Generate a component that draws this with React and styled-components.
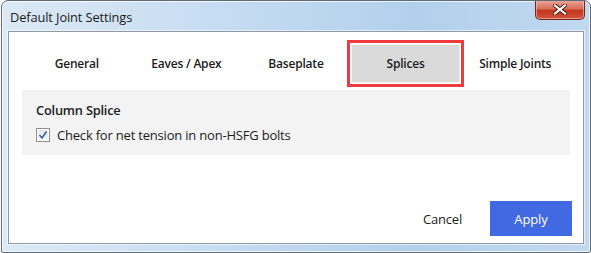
import React, { useState } from "react";
import styled, { createGlobalStyle } from "styled-components";

const GlobalStyle = createGlobalStyle`
  html, body {
    margin: 0;
    padding: 0;
    background: #ffffff;
  }
  body {
    font-family: "Open Sans", "Noto Sans", sans-serif;
    color: #1e1e1e;
  }
`;

// Window chrome
const Frame = styled.div`
  box-sizing: border-box;
  width: 590px;
  height: 253px;
  margin-left: 1px;
  display: flex;
  flex-direction: column;
  border: 1px solid #5f6b78;
  border-radius: 7px 7px 2px 2px;
  background: linear-gradient(90deg, #dce9f6 0%, #c7ddf2 35%, #b2d0ec 70%, #c1d9f0 100%);
  box-shadow: inset 0 0 0 1px rgba(255, 255, 255, 0.75);
  overflow: hidden;
`;

const TitleBar = styled.div`
  height: 30px;
  display: flex;
  align-items: flex-start;
  justify-content: space-between;
  padding-left: 8px;
  padding-right: 5px;
`;

const Title = styled.span`
  margin-top: 7px;
  font-size: 12.8px;
  color: #1b1b1b;
  letter-spacing: -0.1px;
`;

const CloseButton = styled.button`
  width: 50px;
  height: 20px;
  margin-top: -1px;
  padding: 0;
  display: flex;
  align-items: center;
  justify-content: center;
  border: 1px solid #6e2a20;
  border-top: none;
  border-radius: 0 0 5px 5px;
  background: linear-gradient(180deg, #eaa99d 0%, #da6f5a 45%, #c2381e 55%, #d0553b 100%);
  box-shadow: inset 0 0 0 1px rgba(255, 210, 200, 0.55);
  cursor: pointer;
`;

const Client = styled.div`
  flex: 1;
  margin: 0 6px 8px 6px;
  display: flex;
  flex-direction: column;
  background: #ffffff;
  border: 1px solid #8d99a6;
  box-shadow: 0 0 0 1px rgba(255, 255, 255, 0.6);
`;

// Tabs
const TabBar = styled.div`
  display: grid;
  grid-template-columns: repeat(5, 1fr);
  margin: 12px 13px 0 13px;
  height: 39px;
`;

const Tab = styled.div`
  display: flex;
  align-items: center;
  justify-content: center;
  font-size: 12px;
  font-weight: 600;
  letter-spacing: -0.2px;
  color: #1c1c1c;
  cursor: pointer;
  background: ${(p) => (p.$active ? "#dadada" : "transparent")};
  box-shadow: ${(p) =>
    p.$active ? "inset 0 0 0 1px #f4f4f4, 0 0 0 1px #ffffff, 0 0 0 4px #ee3a3f" : "none"};
`;

// Content panel
const Panel = styled.div`
  margin: 7px 13px 0 13px;
  height: 65px;
  box-sizing: border-box;
  padding: 11px 14px 0 14px;
  background: #f3f3f3;
  display: flex;
  flex-direction: column;
  gap: 7px;
`;

const SectionTitle = styled.div`
  font-size: 12.8px;
  font-weight: 600;
  letter-spacing: -0.2px;
  color: #1c1c1c;
`;

const CheckRow = styled.label`
  display: flex;
  align-items: center;
  gap: 7px;
  font-size: 13px;
  letter-spacing: -0.2px;
  color: #1c1c1c;
  cursor: pointer;
`;

const CheckBox = styled.span`
  box-sizing: border-box;
  width: 14px;
  height: 14px;
  display: flex;
  align-items: center;
  justify-content: center;
  border: 1px solid #8f8f8f;
  background: linear-gradient(180deg, #e6e6e6 0%, #f8f8f8 100%);
  box-shadow: inset 0 0 0 1px #ffffff;
`;

// Footer
const Footer = styled.div`
  margin-top: auto;
  display: flex;
  align-items: center;
  justify-content: flex-end;
  gap: 28px;
  padding: 0 11px 7px 0;
`;

const TextButton = styled.button`
  border: none;
  background: none;
  padding: 0;
  font-family: inherit;
  font-size: 13px;
  letter-spacing: -0.2px;
  color: #1c1c1c;
  cursor: pointer;
`;

const PrimaryButton = styled.button`
  width: 82px;
  height: 35px;
  border: none;
  background: #4169e1;
  color: #ffffff;
  font-family: inherit;
  font-size: 13px;
  letter-spacing: -0.1px;
  cursor: pointer;
`;

const tabs = ["General", "Eaves / Apex", "Baseplate", "Splices", "Simple Joints"];

export default function App() {
  const [active, setActive] = useState("Splices");
  const [checked, setChecked] = useState(true);

  return (
    <>
      <GlobalStyle />
      <Frame>
        <TitleBar>
          <Title>Default Joint Settings</Title>
          <CloseButton aria-label="Close">
            <svg width="14" height="11" viewBox="0 0 14 11">
              <path
                d="M2 1.5 L12 9.5 M12 1.5 L2 9.5"
                stroke="#4a1a12"
                strokeWidth="4"
                strokeLinecap="square"
              />
              <path
                d="M2 1.5 L12 9.5 M12 1.5 L2 9.5"
                stroke="#ffffff"
                strokeWidth="2.2"
                strokeLinecap="square"
              />
            </svg>
          </CloseButton>
        </TitleBar>
        <Client>
          <TabBar>
            {tabs.map((t) => (
              <Tab key={t} $active={t === active} onClick={() => setActive(t)}>
                {t}
              </Tab>
            ))}
          </TabBar>
          <Panel>
            <SectionTitle>Column Splice</SectionTitle>
            <CheckRow onClick={() => setChecked(!checked)}>
              <CheckBox>
                {checked && (
                  <svg width="10" height="10" viewBox="0 0 10 10">
                    <path
                      d="M1.5 5 L4 8 L8.5 1.5"
                      fill="none"
                      stroke="#3d5a9e"
                      strokeWidth="1.6"
                    />
                  </svg>
                )}
              </CheckBox>
              Check for net tension in non-HSFG bolts
            </CheckRow>
          </Panel>
          <Footer>
            <TextButton>Cancel</TextButton>
            <PrimaryButton>Apply</PrimaryButton>
          </Footer>
        </Client>
      </Frame>
    </>
  );
}
